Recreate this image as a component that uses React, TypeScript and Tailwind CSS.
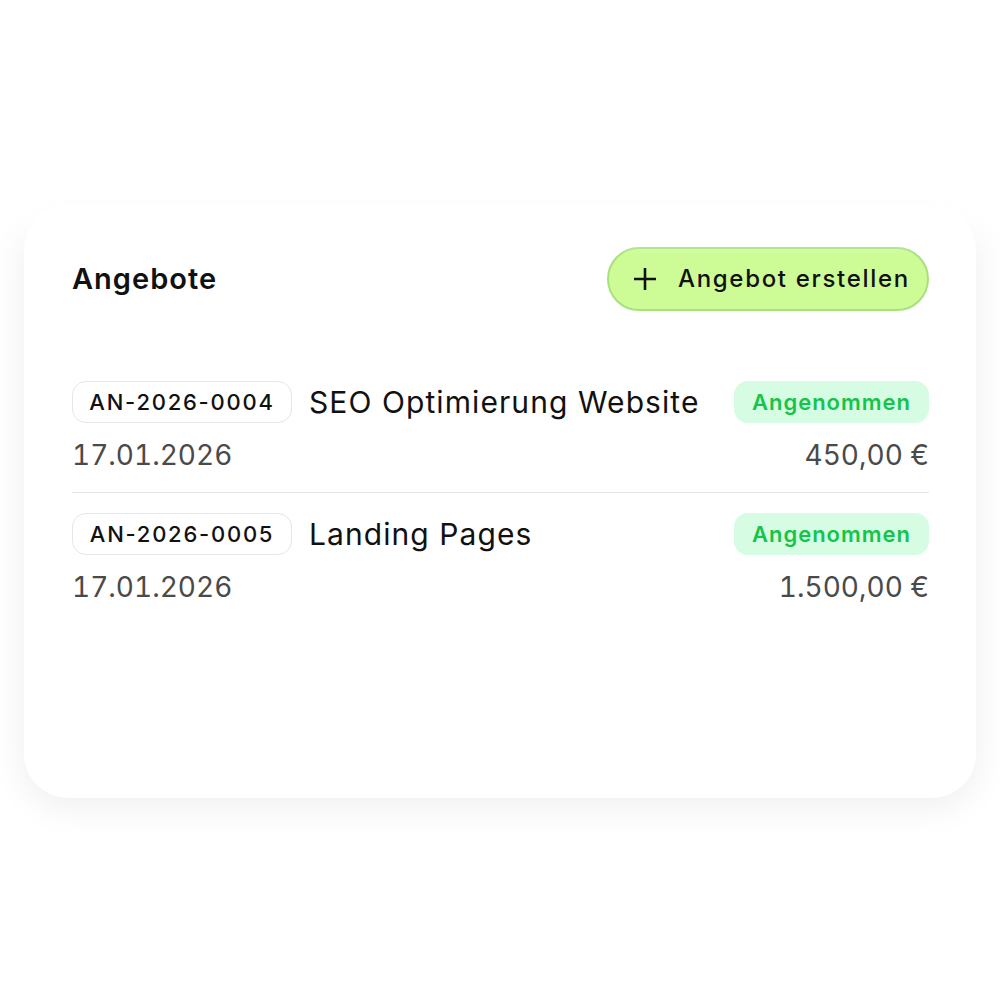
import React from "react";

const rows = [
  { id: "AN-2026-0004", title: "SEO Optimierung Website", date: "17.01.2026", amount: "450,00 €" },
  { id: "AN-2026-0005", title: "Landing Pages", date: "17.01.2026", amount: "1.500,00 €" },
];

export default function App() {
  return (
    <div className="w-[1000px] h-[1000px] bg-white relative overflow-hidden" style={{ fontFamily: "Inter, 'Noto Sans', sans-serif" }}>
      <div className="pt-[205px] px-[24px]">
        <div className="h-[593px] bg-white rounded-[44px] shadow-[0_8px_36px_rgba(0,0,0,0.07)] pl-[48px] pr-[47px] pt-[42px]">
          <div className="flex items-center justify-between h-[64px]">
            <div className="text-[29px] font-semibold text-[#111] tracking-[0.035em]">Angebote</div>
            <button className="h-[64px] w-[322px] rounded-full bg-[#cdfc96] border-2 border-[#a9e07f] flex items-center pl-[24px] gap-[21px] text-[#111]">
              <svg width="24" height="24" viewBox="0 0 24 24" fill="none" stroke="#111" strokeWidth="2.6" strokeLinecap="butt">
                <path d="M12 1v22M1 12h22" />
              </svg>
              <span className="text-[24px] font-medium tracking-[0.07em]">Angebot erstellen</span>
            </button>
          </div>
          <div className="mt-[70px]">
            {rows.map((r, i) => (
              <div key={r.id} className={i > 0 ? "border-t border-[#e4e4e4] pt-[20px]" : "pb-[19px]"}>
                <div className="flex items-center justify-between h-[42px]">
                  <div className="flex items-center gap-[17px]">
                    <span className="h-[42px] w-[220px] rounded-[14px] border border-[#e6e6e6] flex items-center justify-center text-[22px] font-medium text-[#111] tracking-[0.08em]">
                      {r.id}
                    </span>
                    <span className="text-[30px] text-[#111] tracking-[0.036em]">{r.title}</span>
                  </div>
                  <span className="h-[42px] w-[195px] rounded-[14px] bg-[#d6fde4] flex items-center justify-center text-[22px] font-semibold text-[#16c449] tracking-[0.045em]">
                    Angenommen
                  </span>
                </div>
                <div className="mt-[14px] flex items-center justify-between h-[36px] text-[28px] text-[#4a4a4a] tabular-nums">
                  <span>{r.date}</span>
                  <span>{r.amount}</span>
                </div>
              </div>
            ))}
          </div>
        </div>
      </div>
      <div className="absolute left-0 right-0 top-[175px] h-[80px] bg-gradient-to-b from-white via-white/80 to-transparent" />
    </div>
  );
}
